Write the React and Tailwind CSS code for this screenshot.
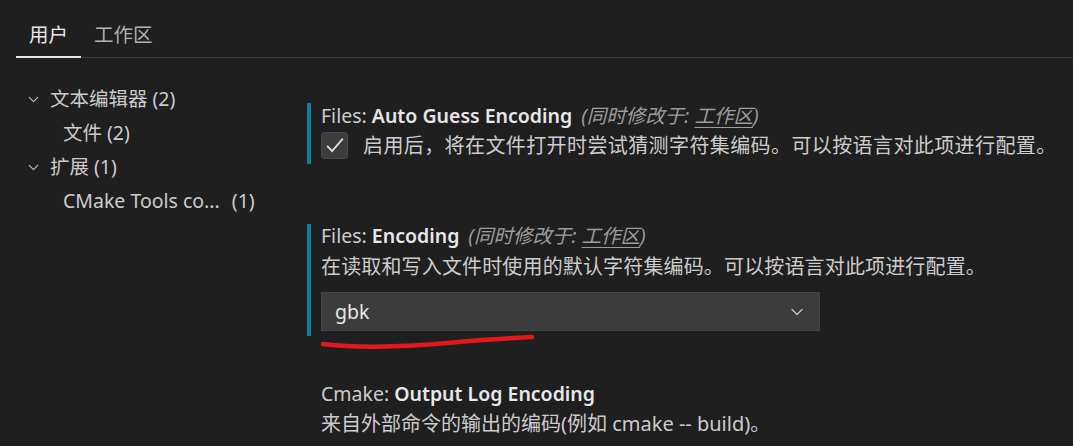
import { ChevronDown } from 'lucide-react';

const font = { fontFamily: '"Noto Sans", "Noto Sans CJK SC", sans-serif' };

function TreeRow({ indent, chevron, label, count, gap }) {
  return (
    <div className={`flex items-center h-[34px] ${indent ? 'pl-[63px]' : 'pl-[25px]'}`}>
      {chevron && <ChevronDown className="w-[17px] h-[17px] text-[#c5c5c5] mr-[8px]" strokeWidth={1.5} />}
      <span className="text-[#cccccc]">{label}</span>
      <span className={`text-[#cccccc] ${gap ? 'ml-[12px]' : 'ml-[5px]'}`}>{count}</span>
    </div>
  );
}

function Modified() {
  return (
    <span className="italic text-[#9d9d9d] ml-[9px] font-normal">
      (同时修改于: <span className="underline underline-offset-4">工作区</span>)
    </span>
  );
}

export default function App() {
  return (
    <div className="w-[1073px] h-[446px] bg-[#1f1f1f] overflow-hidden relative text-[19.5px] leading-[32px]" style={font}>
      {/* tabs */}
      <div className="pl-[16px] pt-[19px]">
        <div className="flex border-b border-[#3a3a3a]">
          <div className="px-[13px] pb-[5px] text-[#e7e7e7] border-b-2 border-[#e7e7e7] -mb-px">用户</div>
          <div className="px-[13px] pb-[5px] text-[#b0b0b0]">工作区</div>
        </div>
      </div>

      <div className="flex">
        {/* tree */}
        <div className="w-[307px] pt-[24px] shrink-0">
          <TreeRow chevron label="文本编辑器" count="(2)" />
          <TreeRow indent label="文件" count="(2)" />
          <TreeRow chevron label="扩展" count="(1)" />
          <TreeRow indent label="CMake Tools co..." count="(1)" gap />
        </div>

        {/* settings */}
        <div className="flex-1 pt-[45px]">
          <div className="border-l-4 border-[#0c7d9d] pl-[10px] pb-[6px]">
            <div className="text-[#cccccc] leading-[26px]">
              Files: <span className="font-semibold text-[#e7e7e7]">Auto Guess Encoding</span>
              <Modified />
            </div>
            <div className="flex items-center mt-[3px] h-[26px]">
              <div className="w-[27px] h-[27px] rounded-[3px] bg-[#3c3c3c] border border-[#474747] flex items-center justify-center shrink-0">
                <svg viewBox="0 0 16 16" className="w-[22px] h-[22px]" fill="none" stroke="#dcdcdc" strokeWidth="1.3">
                  <path d="M2.3 8.6l3.6 3.8 7.8-9" />
                </svg>
              </div>
              <span className="ml-[15px] text-[20px] tracking-[0.4px] text-[#cccccc] mt-[2px]">启用后，将在文件打开时尝试猜测字符集编码。可以按语言对此项进行配置。</span>
            </div>
          </div>

          <div className="mt-[60px] border-l-4 border-[#0c7d9d] pl-[10px] pb-[5px]">
            <div className="text-[#cccccc] leading-[24px]">
              Files: <span className="font-semibold text-[#e7e7e7]">Encoding</span>
              <Modified />
            </div>
            <div className="text-[#cccccc] text-[20px] tracking-[0.15px] mt-[3px]">在读取和写入文件时使用的默认字符集编码。可以按语言对此项进行配置。</div>
            <div className="mt-[9px] w-[499px] h-[39px] bg-[#3c3c3c] border border-[#454545] flex items-center justify-between pl-[13px] pr-[12px]">
              <span className="text-[#e7e7e7]">gbk</span>
              <ChevronDown className="w-[20px] h-[20px] text-[#c5c5c5]" strokeWidth={1.5} />
            </div>
          </div>

          <div className="mt-[45px] pl-[14px]">
            <div className="text-[#cccccc] leading-[26px]">
              Cmake: <span className="font-semibold text-[#e7e7e7]">Output Log Encoding</span>
            </div>
            <div className="text-[#cccccc] text-[20px] mt-px">来自外部命令的输出的编码(例如 cmake -- build)。</div>
          </div>
        </div>
      </div>

      {/* hand-drawn annotation */}
      <svg className="absolute left-[318px] top-[332px]" width="224" height="20" viewBox="0 0 224 20" fill="none">
        <path d="M5 12 C 40 16, 90 15, 140 10 C 170 7, 195 6, 214 5" stroke="#e3171c" strokeWidth="4.5" strokeLinecap="round" />
      </svg>
    </div>
  );
}
